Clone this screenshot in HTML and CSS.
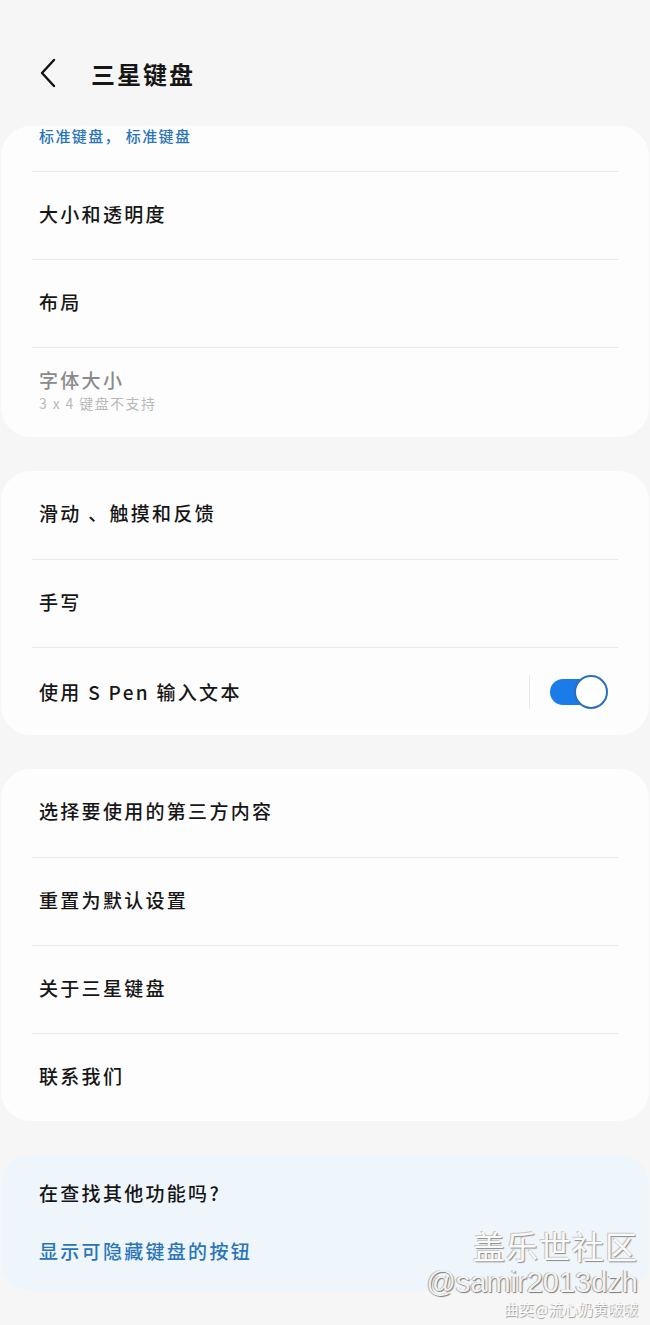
FILE: index.html
```html
<!doctype html>
<html lang="zh-CN">
<head>
	<meta charset="UTF-8">
	<title>三星键盘</title>
	<link rel="stylesheet" href="styles.css">
</head>
<body>
	<div class="page">
		<div class="header">
			<a class="back" href="javascript:void(0);">
				<svg width="22" height="32" viewBox="0 0 22 32"><path d="M17 3 L5 16 L17 29" fill="none" stroke="#111" stroke-width="2.4" stroke-linecap="round" stroke-linejoin="round"/></svg>
			</a>
			<h1 class="title">三星键盘</h1>
		</div>

		<div class="card">
			<div class="row row-cut">
				<span class="sub blue">标准键盘， 标准键盘</span>
			</div>
			<div class="row"><span class="label">大小和透明度</span></div>
			<div class="row"><span class="label">布局</span></div>
			<div class="row row-two disabled">
				<span class="label">字体大小</span>
				<span class="sub">3 x 4 键盘不支持</span>
			</div>
		</div>

		<div class="card">
			<div class="row"><span class="label">滑动 、触摸和反馈</span></div>
			<div class="row"><span class="label">手写</span></div>
			<div class="row row-switch">
				<span class="label">使用 S Pen 输入文本</span>
				<span class="vline"></span>
				<span class="switch on"><i></i></span>
			</div>
		</div>

		<div class="card">
			<div class="row"><span class="label">选择要使用的第三方内容</span></div>
			<div class="row"><span class="label">重置为默认设置</span></div>
			<div class="row"><span class="label">关于三星键盘</span></div>
			<div class="row"><span class="label">联系我们</span></div>
		</div>

		<div class="card card-tip">
			<p class="tip-title">在查找其他功能吗?</p>
			<a class="tip-link" href="javascript:void(0);">显示可隐藏键盘的按钮</a>
		</div>

		<div class="watermark">
			<div class="wm-big">盖乐世社区</div>
			<div class="wm-user">@samir2013dzh</div>
			<div class="wm-small">曲奕@流心奶黄啵啵</div>
		</div>
	</div>
</body>
</html>
```

FILE: styles.css
```css
* {
	box-sizing: border-box;
}
body {
	margin: 0;
	background-color: #f6f6f6;
	font-family: "Noto Sans CJK SC", "Noto Sans", sans-serif;
	color: #161616;
}
.page {
	position: relative;
	width: 650px;
	height: 1325px;
	overflow: hidden;
	padding: 0 1px;
}
a {
	text-decoration: none;
}
.header {
	height: 126px;
	display: flex;
	align-items: center;
	padding: 20px 0 0 36px;
}
.back {
	display: flex;
	width: 54px;
}
.title {
	margin: 0;
	font-size: 24px;
	font-weight: 700;
	letter-spacing: 2px;
}
.card {
	background-color: #fdfdfd;
	border-radius: 30px;
	margin-bottom: 34px;
	overflow: hidden;
}
.row {
	margin: 0 31px;
	padding: 0 7px 4px;
	height: 88px;
	display: flex;
	flex-direction: column;
	justify-content: center;
	border-top: 1px solid #e9e9e9;
}
.row:first-child {
	border-top: none;
}
.row-cut {
	height: 45px;
	justify-content: flex-start;
	padding-top: 0;
}
.row-two {
	height: 90px;
	padding-bottom: 6px;
}
.label {
	font-size: 19px;
	font-weight: 500;
	letter-spacing: 2.3px;
	line-height: 26px;
}
.sub {
	font-size: 14px;
	letter-spacing: 1.4px;
	line-height: 20px;
	color: #b9b9b9;
}
.blue {
	font-size: 15px;
	color: #2a75b8;
	font-weight: 500;
}
.disabled .label {
	color: #8a8a8a;
}
.row-switch {
	flex-direction: row;
	align-items: center;
	justify-content: flex-start;
	padding-bottom: 0;
}
.row-switch .label {
	flex: 1;
}
.vline {
	width: 1px;
	height: 34px;
	background-color: #e6e6e6;
	margin-right: 20px;
}
.switch {
	position: relative;
	display: block;
	width: 58px;
	height: 34px;
	margin-right: 3px;
}
.switch:before {
	content: "";
	position: absolute;
	left: 0;
	top: 4px;
	width: 50px;
	height: 26px;
	border-radius: 13px;
	background-color: #1b7be9;
}
.switch i {
	position: absolute;
	right: 0;
	top: 0;
	width: 34px;
	height: 34px;
	border-radius: 50%;
	background-color: #fff;
	border: 2px solid #2a6fbd;
}
.card-tip {
	background-color: #eef5fb;
	padding: 24px 38px 22px;
	height: 136px;
}
.tip-title {
	margin: 0 0 30px;
	font-size: 19px;
	font-weight: 500;
	letter-spacing: 2.3px;
	line-height: 28px;
}
.tip-link {
	font-size: 19px;
	font-weight: 500;
	letter-spacing: 2.3px;
	line-height: 28px;
	color: #2a75b8;
}
.watermark {
	position: absolute;
	right: 12px;
	top: 1224px;
	text-align: right;
	font-family: "Liberation Sans", "Noto Sans CJK SC", sans-serif;
}
.wm-big {
	font-family: "Noto Sans CJK SC", sans-serif;
	font-size: 32px;
	line-height: 42px;
	color: #fafafa;
	letter-spacing: 1px;
	text-shadow: 1px 1px 1px #8a8a8a, -1px -1px 0 #c8c8c8;
}
.wm-user {
	font-size: 29px;
	line-height: 32px;
	color: #f2f2f2;
	text-shadow: 1px 1px 1px #7a7a7a, -1px 0 0 #b0b0b0;
}
.wm-small {
	font-family: "Noto Sans CJK SC", sans-serif;
	font-size: 15px;
	line-height: 16px;
	margin-top: 3px;
	color: #fafafa;
	text-shadow: 1px 1px 1px #9a9a9a;
}
```
